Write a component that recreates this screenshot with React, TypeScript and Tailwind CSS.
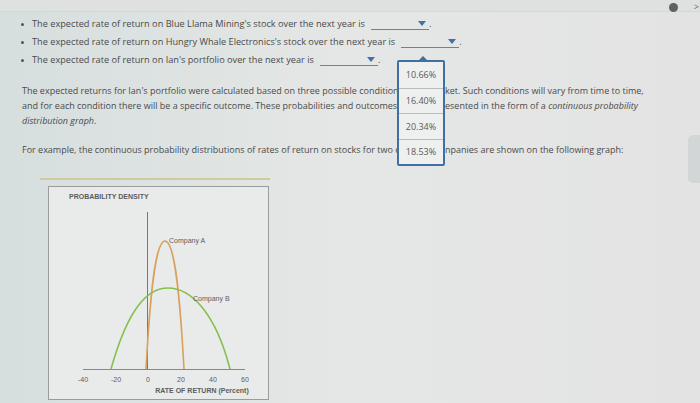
import type { ReactNode } from 'react'

const options = ['10.66%', '16.40%', '20.34%', '18.53%']

function Blank() {
  return (
    <span className="relative ml-[6px] inline-block h-[11px] w-[58px] border-b border-[#5d85b3] align-middle">
      <span className="absolute right-[3px] top-[2px] h-0 w-0 border-x-[4px] border-t-[5px] border-x-transparent border-t-[#3e72a8]" />
    </span>
  )
}

function Bullet({ children }: { children: ReactNode }) {
  return (
    <li className="flex items-center gap-[8px] leading-[18px]">
      <span className="h-[3px] w-[3px] rounded-full bg-[#555]" />
      <span>{children}</span>
    </li>
  )
}

// text on either side of the open dropdown list
function SplitLine({ left, right }: { left: ReactNode; right?: ReactNode }) {
  return (
    <div className="flex whitespace-nowrap">
      <span className="w-[375px] shrink-0">{left}</span>
      {right && <span className="ml-[48px]">{right}</span>}
    </div>
  )
}

function Chart() {
  return (
    <svg width="220" height="212" viewBox="0 0 220 212" className="block">
      <text x="20" y="12" fontSize="7" fontWeight="700" fill="#5c5c5c" fontFamily="Liberation Sans, sans-serif">
        PROBABILITY DENSITY
      </text>
      <line x1="98.5" y1="25" x2="98.5" y2="182" stroke="#777" strokeWidth="1" />
      <line x1="34" y1="182.5" x2="196" y2="182.5" stroke="#888" strokeWidth="1" />
      <path d="M97 182 C101 110 106 54 116 54 C126 54 131 110 135 182" fill="none" stroke="#d9a15d" strokeWidth="1.6" />
      <path d="M62 182 C80 118 100 101 119 101 C141 101 166 124 181 182" fill="none" stroke="#86bf50" strokeWidth="1.6" />
      <g fontSize="7" fill="#5c5c5c" fontFamily="Liberation Sans, sans-serif">
        <text x="120" y="56">Company A</text>
        <text x="144" y="114">Company B</text>
        <text x="34" y="195" textAnchor="middle">-40</text>
        <text x="67" y="195" textAnchor="middle">-20</text>
        <text x="99" y="195" textAnchor="middle">0</text>
        <text x="132" y="195" textAnchor="middle">20</text>
        <text x="164" y="195" textAnchor="middle">40</text>
        <text x="196" y="195" textAnchor="middle">60</text>
        <text x="153" y="206" textAnchor="middle" fontWeight="700">RATE OF RETURN (Percent)</text>
      </g>
    </svg>
  )
}

export default function App() {
  return (
    <div className="relative h-[403px] w-[700px] overflow-hidden bg-gradient-to-r from-[#d6dfde] via-[#e5e7e6] to-[#e3e3e3] font-['Open_Sans',sans-serif] text-[9.2px] text-[#4a4a4a]">
      <div className="flex h-[12px] justify-end gap-[16px] border-b border-[#d6d8d8] bg-[#dfe1e1] pr-[1px]">
        <span className="mt-[3px] h-[9px] w-[9px] rounded-full bg-[#5e6062]" />
        <span className="text-[9px] leading-[14px] text-[#666]">&gt;</span>
      </div>

      <ul className="ml-[21px] mt-[3px]">
        <Bullet>
          The expected rate of return on Blue Llama Mining's stock over the next year is
          <Blank />.
        </Bullet>
        <Bullet>
          The expected rate of return on Hungry Whale Electronics's stock over the next year is
          <Blank />.
        </Bullet>
        <Bullet>
          The expected rate of return on Ian's portfolio over the next year is
          <Blank />.
        </Bullet>
      </ul>

      <div className="ml-[22px] mt-[14px] text-[9px] leading-[15px]">
        <SplitLine
          left="The expected returns for Ian's portfolio were calculated based on three possible condition"
          right="ket. Such conditions will vary from time to time,"
        />
        <SplitLine
          left="and for each condition there will be a specific outcome. These probabilities and outcomes"
          right={
            <>
              esented in the form of a <i>continuous probability</i>
            </>
          }
        />
        <SplitLine
          left={
            <>
              <i>distribution graph</i>.
            </>
          }
        />
        <div className="mt-[14px]">
          <SplitLine
            left="For example, the continuous probability distributions of rates of return on stocks for two c"
            right="npanies are shown on the following graph:"
          />
        </div>
      </div>

      <div className="ml-[40px] mt-[21px] h-[2px] w-[230px] bg-[#cfcb9e]" />
      <div className="ml-[48px] mt-[6px] w-[221px] border border-[#9b9d9c] bg-[#e9ebea]">
        <Chart />
      </div>

      <div className="absolute left-[397px] top-[60px] w-[48px] rounded-[2px] border-2 border-[#3f70a4] bg-[#eef0f0] text-[9px] text-[#5a5a5a]">
        <span className="absolute left-[19px] top-[-6px] h-0 w-0 border-x-[5px] border-b-[5px] border-x-transparent border-b-[#3f70a4]" />
        {options.map((o, i) => (
          <div
            key={o}
            className={`flex h-[25.5px] items-center justify-center ${i > 0 ? 'border-t border-[#b9bcbd]' : ''}`}
          >
            {o}
          </div>
        ))}
      </div>

      <div className="absolute right-0 top-[135px] h-[48px] w-[12px] rounded-l-[5px] bg-[#d3d6d6]" />
    </div>
  )
}
